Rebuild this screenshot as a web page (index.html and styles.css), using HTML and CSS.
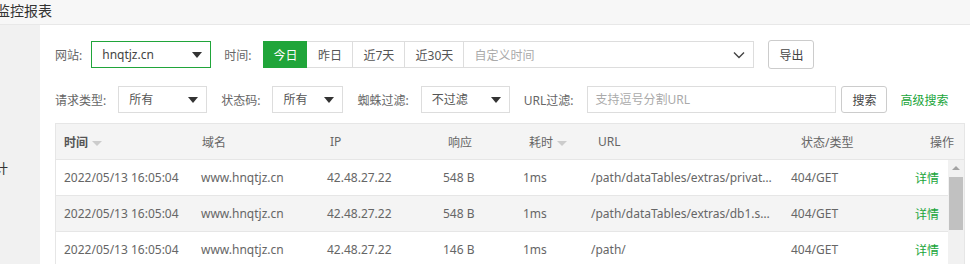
FILE: index.html
```html
<!DOCTYPE html>
<html lang="zh-CN">
<head>
    <meta charset="UTF-8">
    <meta name="viewport" content="width=device-width, initial-scale=1.0">
    <title>监控报表</title>
    <link rel="stylesheet" href="styles.css">
</head>
<body>
    <div class="title-bar">监控报表</div>
    <div class="page">
        <div class="side">计</div>
        <div class="panel">
            <div class="filter-row first">
                <span class="label">网站:</span>
                <div class="select site">hnqtjz.cn<span class="caret"></span></div>
                <span class="label">时间:</span>
                <div class="btn-group">
                    <span class="seg active">今日</span>
                    <span class="seg w46">昨日</span>
                    <span class="seg w52">近7天</span>
                    <span class="seg w59">近30天</span>
                    <span class="seg custom">自定义时间
                        <svg class="chev" width="12" height="8" viewBox="0 0 12 8"><path d="M1 1.5l5 5 5-5" fill="none" stroke="#444" stroke-width="1.4"/></svg>
                    </span>
                </div>
                <button class="btn export">导出</button>
            </div>
            <div class="filter-row second">
                <span class="label">请求类型:</span>
                <div class="select w89">所有<span class="caret"></span></div>
                <span class="label">状态码:</span>
                <div class="select w71">所有<span class="caret"></span></div>
                <span class="label">蜘蛛过滤:</span>
                <div class="select w89">不过滤<span class="caret"></span></div>
                <span class="label url-label">URL过滤:</span>
                <div class="input url">支持逗号分割URL</div>
                <button class="btn search">搜索</button>
                <a class="adv">高级搜索</a>
            </div>

            <div class="table">
                <div class="thead">
                    <span class="bold">时间<i class="sort"></i></span>
                    <span>域名</span>
                    <span>IP</span>
                    <span>响应</span>
                    <span>耗时<i class="sort"></i></span>
                    <span>URL</span>
                    <span>状态/类型</span>
                    <span class="right">操作</span>
                </div>
                <div class="tbody-wrap">
                    <div class="tbody">
                        <div class="tr">
                            <span>2022/05/13 16:05:04</span>
                            <span>www.hnqtjz.cn</span>
                            <span>42.48.27.22</span>
                            <span>548 B</span>
                            <span>1ms</span>
                            <span class="ellipsis">/path/dataTables/extras/private_key.pem</span>
                            <span>404/GET</span>
                            <span class="right link">详情</span>
                        </div>
                        <div class="tr hover">
                            <span>2022/05/13 16:05:04</span>
                            <span>www.hnqtjz.cn</span>
                            <span>42.48.27.22</span>
                            <span>548 B</span>
                            <span>1ms</span>
                            <span class="ellipsis">/path/dataTables/extras/db1.sql.gz</span>
                            <span>404/GET</span>
                            <span class="right link">详情</span>
                        </div>
                        <div class="tr">
                            <span>2022/05/13 16:05:04</span>
                            <span>www.hnqtjz.cn</span>
                            <span>42.48.27.22</span>
                            <span>146 B</span>
                            <span>1ms</span>
                            <span class="ellipsis">/path/</span>
                            <span>404/GET</span>
                            <span class="right link">详情</span>
                        </div>
                    </div>
                    <div class="scrollbar">
                        <i class="arrow-up"></i>
                        <div class="thumb"></div>
                    </div>
                </div>
            </div>
        </div>
    </div>
</body>
</html>
```

FILE: styles.css
```css
body {
    margin: 0;
    font-family: "Noto Sans", "Noto Sans CJK SC", sans-serif;
    font-size: 12px;
    color: #666;
    background-color: #fff;
    overflow: hidden;
}
.title-bar {
    height: 24px;
    line-height: 22px;
    font-size: 14px;
    color: #333;
    background-color: #f7f7f7;
    border-bottom: 1px solid #e8e8e8;
    margin-left: -4px;
}
.page {
    display: flex;
    height: 240px;
}
.side {
    width: 40px;
    background-color: #f1f1f1;
    padding-top: 133px;
    text-indent: -5px;
    font-size: 13px;
    color: #333;
    overflow: hidden;
    box-sizing: border-box;
}
.panel {
    flex: 1;
    padding: 15px 5px 0 15px;
}
.filter-row {
    display: flex;
    align-items: center;
    height: 29px;
}
.filter-row.second {
    margin-top: 17px;
    height: 27px;
}
.label {
    color: #666;
    margin-right: 9px;
}
.second .label {
    margin-right: 12px;
}
.second .url-label {
    margin-right: 14px;
}
.select {
    position: relative;
    height: 27px;
    line-height: 25px;
    border: 1px solid #ddd;
    box-sizing: border-box;
    padding-left: 10px;
    color: #555;
    margin-right: 13px;
}
.second .select {
    margin-right: 14px;
}
.select.site {
    width: 120px;
    border-color: #20a53a;
    color: #444;
}
.select.w89 {
    width: 89px;
}
.select.w71 {
    width: 71px;
}
.caret {
    position: absolute;
    right: 8px;
    top: 10px;
    width: 0;
    height: 0;
    border-left: 5px solid transparent;
    border-right: 5px solid transparent;
    border-top: 6px solid #333;
}
.btn-group {
    display: flex;
    height: 27px;
    border: 1px solid #ddd;
    box-sizing: border-box;
    margin-left: 3px;
}
.seg {
    display: flex;
    align-items: center;
    justify-content: center;
    box-sizing: border-box;
    border-left: 1px solid #ddd;
    color: #555;
}
.seg.active {
    width: 44px;
    background-color: #20a53a;
    color: #fff;
    border-left: none;
    margin: -1px 0 -1px -1px;
}
.seg.w46 {
    width: 45px;
    border-left: none;
}
.seg.w52 {
    width: 52px;
}
.seg.w59 {
    width: 59px;
}
.seg.custom {
    width: 290px;
    color: #aaa;
    justify-content: space-between;
    padding: 0 8px 0 10px;
}
.btn {
    font-family: inherit;
    font-size: 12px;
    color: #444;
    background-color: #fff;
    border: 1px solid #ccc;
    border-radius: 3px;
    padding: 0;
    width: 46px;
}
.btn.export {
    height: 29px;
    margin-left: 14px;
}
.btn.search {
    height: 27px;
    margin-left: 5px;
}
.input {
    width: 249px;
    height: 27px;
    line-height: 25px;
    border: 1px solid #ddd;
    box-sizing: border-box;
    padding-left: 7px;
    color: #aaa;
}
.adv {
    color: #20a53a;
    margin-left: 13px;
}
.table {
    margin-top: 10px;
    width: 910px;
    border: 1px solid #e6e6e6;
    box-sizing: border-box;
}
.thead,
.tr {
    display: grid;
    align-items: center;
}
.thead {
    grid-template-columns: 138px 128px 118px 81px 69px 203px 100px 1fr;
    height: 35px;
    background-color: #f4f4f4;
    border-bottom: 1px solid #e6e6e6;
}
.thead span,
.tr span {
    padding-left: 8px;
    white-space: nowrap;
}
.thead .right {
    text-align: right;
    padding-right: 10px;
}
.bold {
    font-weight: bold;
    color: #555;
}
.sort {
    display: inline-block;
    margin-left: 4px;
    vertical-align: middle;
    border-left: 5px solid transparent;
    border-right: 5px solid transparent;
    border-top: 5px solid #ccc;
}
.tbody-wrap {
    display: flex;
}
.tbody {
    width: 892px;
}
.tr {
    grid-template-columns: 137px 126px 116px 80px 68px 200px 100px 1fr;
    height: 35px;
    border-bottom: 1px solid #e6e6e6;
    color: #666;
}
.tr.hover {
    background-color: #f4f4f4;
}
.tr .ellipsis {
    overflow: hidden;
    text-overflow: ellipsis;
    padding-right: 10px;
}
.tr .right {
    text-align: right;
    padding-right: 9px;
}
.link {
    color: #20a53a;
}
.scrollbar {
    flex: 1;
    background-color: #f1f1f1;
    position: relative;
    height: 120px;
}
.arrow-up {
    position: absolute;
    left: 4px;
    top: 6px;
    border-left: 4px solid transparent;
    border-right: 4px solid transparent;
    border-bottom: 4px solid #a3a3a3;
}
.thumb {
    position: absolute;
    left: 1px;
    right: 1px;
    top: 17px;
    height: 53px;
    background-color: #c1c1c1;
}
```
